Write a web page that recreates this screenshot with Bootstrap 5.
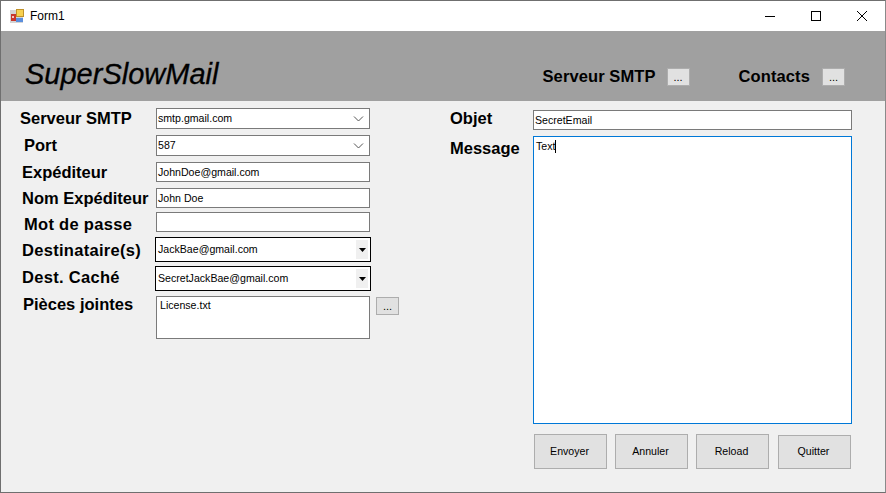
<!DOCTYPE html>
<html lang="fr">
<head>
<meta charset="utf-8">
<title>Form1</title>
<link href="https://cdn.jsdelivr.net/npm/bootstrap@5.3.0/dist/css/bootstrap.min.css" rel="stylesheet">
<style>
html,body{margin:0;height:493px;overflow:hidden;background:#f0f0f0;}
body{font-family:"Liberation Sans",Arial,sans-serif;font-size:10.6px;color:#000;}
.winbox{width:886px;height:493px;border:1px solid #6f6f6f;border-right-color:#8a8a8a;background:#f0f0f0;}
.titlebar{height:30px;background:#fff;}
.ttl{font-size:12px;margin-left:6px;}
.appicon{margin-left:9px;}
.capbtn{width:46px;height:30px;}
.hdr{height:70px;background:#a0a0a0;}
.logo{font-size:29px;font-style:italic;margin-left:24px;margin-top:26px;line-height:34px;-webkit-text-stroke:.3px #000;}
.hlabel{font-size:16.5px;line-height:20px;font-weight:700;letter-spacing:.1px;}
.hgrp{padding-top:35px;}
.hl1{margin-right:11px;}
.hl2{margin-left:49px;margin-right:12px;}
.hend{margin-right:40px;}
.dots{width:23px;height:18px;padding:0;border:1px solid #adadad;border-radius:0;background:#e1e1e1;font-size:11px;line-height:16px;color:#000;margin-top:2px;}
.leftcol{width:532px;flex:none;padding-top:7px;}
.rowl{display:flex;align-items:center;}
.lbl{font-size:16.5px;line-height:20px;white-space:nowrap;font-weight:700;}
.wide1{letter-spacing:.3px;}
.slot{width:155px;flex:none;}
.p20{padding-left:19px;}.p24{padding-left:23px;}.p22{padding-left:21px;}.p23{padding-left:22px;}
.mt6{margin-top:6px;}.mt4{margin-top:4px;}.mt5{margin-top:5px;}
.dn2{margin-top:2px;margin-bottom:-2px;}
.up2{margin-top:-2px;}
.up3{margin-top:-3px;}
.fld{width:214px;height:20px;border:1px solid #7a7a7a;background:#fff;line-height:18px;padding:0 1px 0 0;display:flex;align-items:center;justify-content:space-between;border-radius:0;color:#000;}
.fldt{height:21px;padding-bottom:1px;}
.fldv{padding-left:1px;}
.chev{margin-right:4px;margin-top:1px;}
.combo{width:216px;height:25px;border:1px solid #000;margin-left:-1px;background:#fff;display:flex;align-items:center;justify-content:space-between;padding:2px;}
.combotx{padding-top:1px;}
.dropb{width:12px;height:19px;background:#f0f0f0;display:flex;align-items:center;justify-content:center;}
.rowp{align-items:flex-start;}
.ptxt{height:43px;align-items:flex-start;padding:2px 3px;line-height:13px;}
.attach.dots{margin-left:6px;margin-top:1px;}
.rightcol{padding-top:9px;}
.objlbl{width:83px;margin-left:-83px;flex:none;}
.objf{width:319px;height:20px;}
.msg{width:319px;height:288px;border:1px solid #0078d7;background:#fff;line-height:13px;padding:3px 2px;margin-top:6px;}
.msglbl{margin-top:8px;}
.objup{margin-top:-4px;}
.caret1{display:inline-block;width:1px;height:13px;background:#000;vertical-align:top;}
.acts{gap:8px;margin-top:10px;margin-left:1px;}
.actb{width:73px;height:35px;padding:0 2px 0 0;border:1px solid #adadad;border-radius:0;background:#e1e1e1;font-size:10.6px;color:#000;}
.actb4{margin-left:1px;margin-top:1px;height:34px;}
</style>
</head>
<body>
<div class="winbox d-flex flex-column">
  <div class="titlebar d-flex align-items-center">
    <svg class="appicon" width="14" height="14" viewBox="0 0 14 14"><rect x="0" y="1" width="13" height="13" fill="#d4d4d4"/><rect x="1" y="5" width="5" height="7" fill="#c8352b"/><rect x="2" y="7" width="2" height="2" fill="#f0c8c0"/><rect x="6.5" y=".5" width="7" height="7" fill="#f7d04f" stroke="#c0922a"/><rect x="6" y="9" width="7" height="4" fill="#5b8fdd"/></svg>
    <span class="ttl">Form1</span>
    <div class="ms-auto d-flex">
      <div class="capbtn d-flex align-items-center justify-content-center"><svg width="12" height="12" viewBox="0 0 12 12"><path d="M1 6.5h10" stroke="#000" fill="none"/></svg></div>
      <div class="capbtn d-flex align-items-center justify-content-center"><svg width="12" height="12" viewBox="0 0 12 12"><rect x="1.5" y="1.5" width="9" height="9" stroke="#000" fill="none"/></svg></div>
      <div class="capbtn d-flex align-items-center justify-content-center"><svg width="12" height="12" viewBox="0 0 12 12"><path d="M1 1l10 10M11 1L1 11" stroke="#000" fill="none"/></svg></div>
    </div>
  </div>
  <div class="hdr d-flex">
    <div class="logo">SuperSlowMail</div>
    <div class="hgrp ms-auto d-flex align-items-start hend">
      <span class="hlabel hl1">Serveur SMTP</span><button class="btn dots" type="button">...</button>
      <span class="hlabel hl2">Contacts</span><button class="btn dots" type="button">...</button>
    </div>
  </div>
  <div class="d-flex flex-grow-1">
    <div class="leftcol">
      <div class="rowl"><div class="slot lbl p20 up2">Serveur SMTP</div><div class="fld fldt"><span class="fldv">smtp.gmail.com</span><svg class="chev" width="11" height="6" viewBox="0 0 11 6"><path d="M1 .5l4.5 4.5L10 .5" stroke="#555" fill="none"/></svg></div></div>
      <div class="rowl mt6"><div class="slot lbl p24 up2">Port</div><div class="fld fldt"><span class="fldv">587</span><svg class="chev" width="11" height="6" viewBox="0 0 11 6"><path d="M1 .5l4.5 4.5L10 .5" stroke="#555" fill="none"/></svg></div></div>
      <div class="rowl mt6"><div class="slot lbl p22">Expéditeur</div><div class="fld"><span class="fldv">JohnDoe@gmail.com</span></div></div>
      <div class="rowl mt6"><div class="slot lbl p22">Nom Expéditeur</div><div class="fld"><span class="fldv">John Doe</span></div></div>
      <div class="rowl mt4"><div class="slot lbl p24 dn2 wide1">Mot de passe</div><div class="fld"></div></div>
      <div class="rowl mt5"><div class="slot lbl p22 wide1">Destinataire(s)</div><div class="combo"><span class="combotx">JackBae@gmail.com</span><span class="dropb"><svg width="7" height="4" viewBox="0 0 7 4"><path d="M0 0h7L3.5 4z" fill="#000"/></svg></span></div></div>
      <div class="rowl mt4"><div class="slot lbl p22 up3 wide1">Dest. Caché</div><div class="combo"><span class="combotx">SecretJackBae@gmail.com</span><span class="dropb"><svg width="7" height="4" viewBox="0 0 7 4"><path d="M0 0h7L3.5 4z" fill="#000"/></svg></span></div></div>
      <div class="rowl rowp mt5"><div class="slot lbl p23 up2">Pièces jointes</div><div class="fld ptxt">License.txt</div><button class="btn dots attach" type="button">...</button></div>
    </div>
    <div class="rightcol">
      <div class="d-flex align-items-center"><div class="lbl objlbl objup">Objet</div><div class="fld objf"><span class="fldv">SecretEmail</span></div></div>
      <div class="d-flex align-items-start"><div class="lbl objlbl msglbl">Message</div><div class="msg">Text<span class="caret1"></span></div></div>
      <div class="d-flex acts align-items-start">
        <button class="btn actb" type="button">Envoyer</button>
        <button class="btn actb" type="button">Annuler</button>
        <button class="btn actb" type="button">Reload</button>
        <button class="btn actb actb4" type="button">Quitter</button>
      </div>
    </div>
  </div>
</div>
</body>
</html>
